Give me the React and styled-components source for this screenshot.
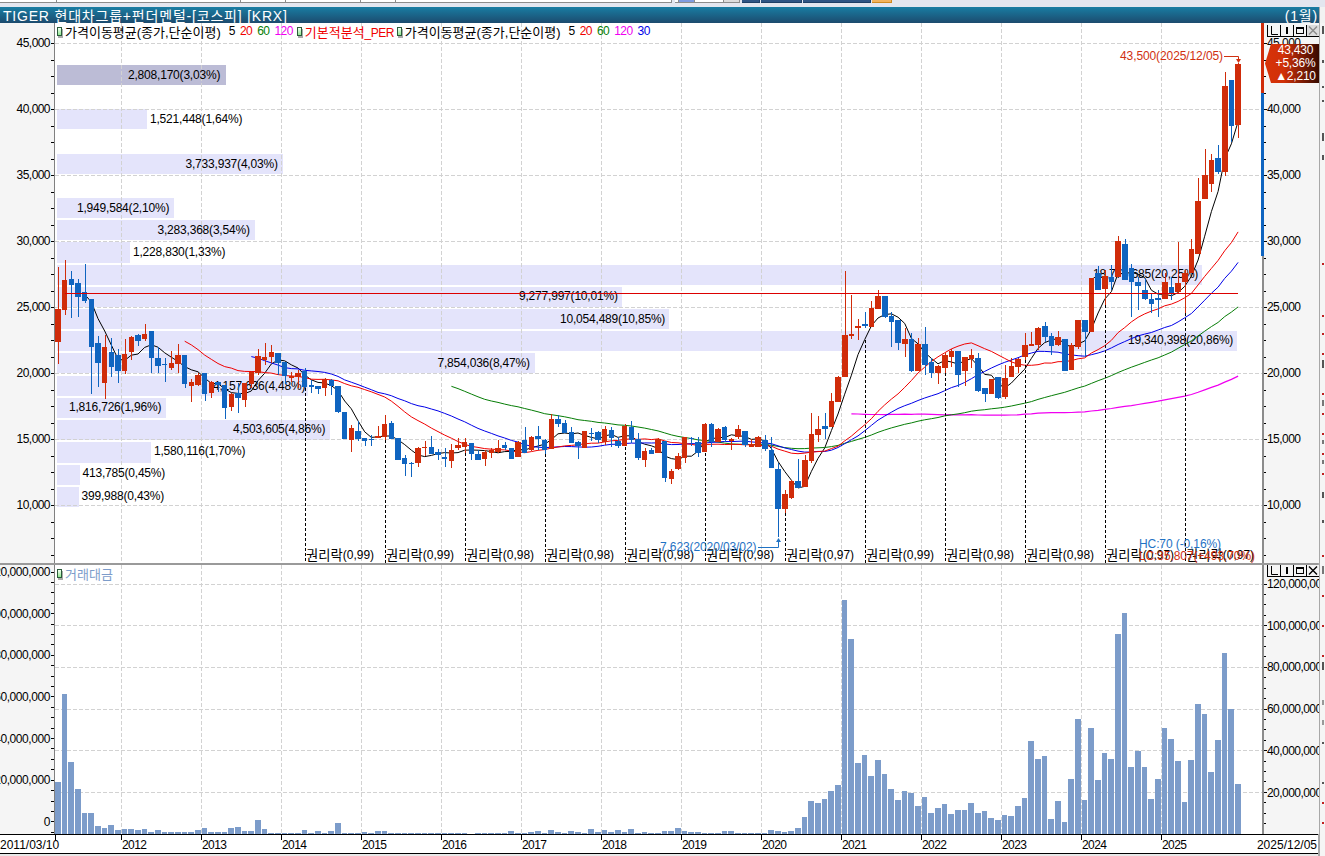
import React from 'react';
import styled, { createGlobalStyle } from 'styled-components';

const FONT = '"Liberation Sans", "Noto Sans CJK KR", sans-serif';

const GlobalStyle = createGlobalStyle`
  html, body { margin: 0; padding: 0; background: #e3e6ef; }
  body { font-family: ${FONT}; }
`;

const UP = '#d02c0a';
const DOWN = '#0f64c0';

// r/b, body top, body bottom, high, low  (in page pixels)
const candles = [
  ['r',309,342,267,364],['r',280,310,260,315],['b',279,285,271,318],['b',283,297,279,317],['b',292,301,264,303],
  ['b',299,347,299,394],['b',343,363,336,387],['r',347,383,335,399],['b',352,367,338,377],['b',355,371,349,383],
  ['r',354,371,339,374],['r',337,352,336,360],['b',335,341,334,346],['r',334,339,324,341],['b',331,358,331,373],
  ['b',358,366,347,373],['b',364,365,358,382],['r',363,368,351,370],['r',355,364,344,373],['b',355,384,355,388],
  ['r',382,386,379,402],['r',375,385,373,386],['b',373,394,373,401],['r',382,393,381,398],['b',382,385,382,392],
  ['b',385,408,385,419],['r',394,407,393,411],['b',393,398,383,413],['r',383,400,383,407],['r',372,384,371,388],
  ['r',356,373,349,375],['r',357,360,343,365],['r',352,357,345,363],['b',353,363,353,375],['b',362,376,362,384],
  ['r',376,378,372,382],['r',373,377,370,388],['b',371,387,368,388],['b',385,387,380,393],['b',386,389,386,394],
  ['r',379,388,378,396],['b',380,386,379,395],['b',386,412,386,413],['b',412,439,412,439],['r',428,440,425,452],
  ['b',431,439,421,441],['b',438,441,438,446],['b',439,440,435,446],['r',436,438,426,438],['r',424,437,415,441],
  ['b',423,439,421,439],['b',438,460,438,460],['b',458,464,455,476],['b',463,464,462,477],['r',448,463,447,467],
  ['r',447,448,441,456],['b',447,454,436,454],['b',452,455,449,460],['b',457,459,448,467],['r',450,461,444,468],
  ['r',445,448,438,450],['r',442,447,438,455],['b',443,454,443,460],['b',454,460,450,460],['r',452,459,450,466],
  ['r',450,453,448,458],['r',448,452,440,453],['b',445,448,442,450],['b',448,459,448,459],['r',442,457,441,457],
  ['b',440,453,427,453],['r',437,450,436,451],['b',436,439,426,450],['b',440,450,439,455],['r',419,449,414,449],
  ['b',419,424,415,427],['b',423,433,420,433],['b',432,443,427,443],['b',442,446,441,459],['r',431,448,431,448],
  ['b',433,434,428,441],['b',432,440,431,443],['r',429,442,426,445],['b',430,438,427,447],['b',441,446,437,448],
  ['r',426,446,424,446],['b',427,440,421,443],['b',439,458,433,460],['r',451,460,448,467],['b',450,454,448,454],
  ['r',439,453,438,453],['b',441,478,441,482],['r',471,479,469,484],['r',456,469,453,470],['r',437,458,437,463],
  ['b',438,439,437,446],['b',442,453,437,457],['r',424,452,423,452],['b',424,442,423,447],['r',429,442,428,442],
  ['b',427,440,426,442],['r',439,441,438,450],['r',429,437,425,439],['b',431,445,431,447],['r',444,447,439,447],
  ['r',437,447,436,447],['b',440,449,435,451],['b',450,468,437,468],['b',469,509,463,537],['r',494,509,490,513],
  ['r',481,498,480,499],['b',481,488,459,488],['r',460,487,455,487],['r',434,461,413,463],['r',429,435,416,442],
  ['b',426,429,413,439],['r',401,427,393,427],['r',377,402,376,402],['r',335,377,271,377],['r',334,336,295,339],
  ['r',326,328,319,340],['b',324,326,312,328],['r',308,327,301,327],['r',296,309,290,309],['b',296,317,296,318],
  ['b',316,322,312,347],['b',320,343,320,350],['r',339,344,328,357],['b',339,371,333,372],['r',344,371,338,371],
  ['b',344,365,327,375],['b',362,373,358,378],['r',366,373,365,384],['r',355,368,353,373],['r',351,357,349,367],
  ['b',351,375,351,387],['r',357,371,357,386],['r',355,359,349,368],['b',358,391,353,392],['b',388,394,388,402],
  ['r',379,394,379,394],['b',377,398,377,399],['r',378,397,365,399],['r',366,377,358,377],['r',359,367,358,373],
  ['r',345,357,333,360],['r',344,346,332,346],['r',328,345,327,350],['b',326,337,322,342],['b',336,346,333,355],
  ['r',337,345,331,346],['b',339,371,339,371],['r',345,370,343,370],['r',320,347,320,349],['b',320,332,320,357],
  ['r',278,332,278,332],['b',273,290,266,290],['r',276,289,270,305],['b',277,282,265,290],['r',241,277,236,277],
  ['b',244,280,239,280],['b',268,282,264,317],['b',282,286,277,310],['b',290,299,278,300],['b',299,304,293,313],
  ['b',298,300,290,317],['r',282,299,273,299],['b',287,294,277,300],['r',283,292,242,294],['r',273,282,270,313],
  ['r',249,273,239,273],['r',201,254,178,254],['r',175,199,149,199],['r',160,184,154,192],['b',158,172,145,174],
  ['r',86,172,72,176],['b',80,126,80,142],['r',64,125,63,138],
];

// volume bar heights in page pixels, one per candle
const volumes = [
  52,140,72,45,21,21,8,6,9,4,5,5,4,5,2,4,2,2,2,2,2,4,6,2,2,2,6,7,3,3,14,5,1,1,1,1,1,4,1,3,1,3,11,
  1,1,1,2,1,3,3,1,1,1,1,1,1,1,1,1,1,1,1,0,1,1,1,1,1,3,1,1,2,3,1,4,2,1,3,2,1,5,2,4,2,4,2,5,1,2,1,1,3,3,6,3,2,2,1,1,1,3,3,1,1,1,1,
  1,4,3,2,3,6,17,33,31,35,43,49,234,195,71,79,58,74,60,45,34,43,41,28,37,21,26,30,20,24,24,31,21,23,16,14,19,18,28,36,93,75,78,15,33,12,55,115,34,106,54,81,75,200,221,67,83,67,35,55,106,95,73,32,74,130,120,62,94,181,125,50,
];

const profileBars = [
  { top: 65, bottom: 85, right: 226, dark: true, text: '2,808,170(3,03%)', x: 128, y: 74.5 },
  { top: 109, bottom: 129, right: 147, text: '1,521,448(1,64%)', x: 150, y: 118.5 },
  { top: 154, bottom: 174, right: 283, text: '3,733,937(4,03%)', x: 185.5, y: 163.5 },
  { top: 198, bottom: 218, right: 174, text: '1,949,584(2,10%)', x: 77, y: 207.5 },
  { top: 220, bottom: 240, right: 255, text: '3,283,368(3,54%)', x: 157.5, y: 229.5 },
  { top: 242, bottom: 263, right: 130, text: '1,228,830(1,33%)', x: 133, y: 251.5 },
  { top: 265, bottom: 285, right: 1202, text: '18,775,685(20,25%)', x: 1093, y: 274 },
  { top: 287, bottom: 307, right: 622, text: '9,277,997(10,01%)', x: 519, y: 296 },
  { top: 309, bottom: 329, right: 669, text: '10,054,489(10,85%)', x: 560, y: 318.5 },
  { top: 331, bottom: 351, right: 1237, text: '19,340,398(20,86%)', x: 1128, y: 340 },
  { top: 353, bottom: 373, right: 535, text: '7,854,036(8,47%)', x: 437.5, y: 362.5 },
  { top: 376, bottom: 396, right: 308, text: '4,157,636(4,48%)', x: 213, y: 385.5 },
  { top: 398, bottom: 418, right: 166, text: '1,816,726(1,96%)', x: 69, y: 407 },
  { top: 420, bottom: 440, right: 330, text: '4,503,605(4,86%)', x: 233, y: 429 },
  { top: 442, bottom: 463, right: 151, text: '1,580,116(1,70%)', x: 154, y: 451 },
  { top: 465, bottom: 485, right: 80, text: '413,785(0,45%)', x: 82.5, y: 473 },
  { top: 487, bottom: 507, right: 79, text: '399,988(0,43%)', x: 81.5, y: 496 },
];

const exRights = [
  { x: 305.5, from: 388, ratio: '0,99' }, { x: 385.5, from: 440, ratio: '0,99' },
  { x: 465.5, from: 453, ratio: '0,98' }, { x: 545.5, from: 454, ratio: '0,98' },
  { x: 625.5, from: 447, ratio: '0,98' }, { x: 705.5, from: 453, ratio: '0,98' },
  { x: 785.5, from: 513, ratio: '0,97' }, { x: 865.5, from: 340, ratio: '0,99' },
  { x: 945.5, from: 373, ratio: '0,98' }, { x: 1025.5, from: 360, ratio: '0,98' },
  { x: 1105.5, from: 305, ratio: '0,97' }, { x: 1185.5, from: 313, ratio: '0,97' },
];

const priceLabels = ['45,000', '40,000', '35,000', '30,000', '25,000', '20,000', '15,000', '10,000'];
const volumeLabels = ['120,000,000', '100,000,000', '80,000,000', '60,000,000', '40,000,000', '20,000,000'];
const years = [2012, 2013, 2014, 2015, 2016, 2017, 2018, 2019, 2020, 2021, 2022, 2023, 2024, 2025];
const yearX = years.map((_, i) => 121.5 + i * 80);

const candleX = (i) => 58 + i * 6.667;
const priceY = (i) => 43 + i * 66;
const volY = (i) => 584 + i * 41.7;
const leftVolY = (i) => 572 + i * 41.65;

const closes = candles.map((c) => (c[0] === 'r' ? c[1] : c[2]));
const movingAverage = (n) => {
  const pts = [];
  for (let i = n - 1; i < closes.length; i++) {
    let sum = 0;
    for (let j = i - n + 1; j <= i; j++) sum += closes[j];
    pts.push(`${candleX(i).toFixed(1)},${(sum / n).toFixed(1)}`);
  }
  return pts.join(' ');
};

const Page = styled.div`
  width: 1325px;
  height: 856px;
  overflow: hidden;
  display: flex;
  flex-direction: column;
  background: #e3e6ef;
`;

const TopStrip = styled.div`
  height: 7px;
  display: flex;
  align-items: flex-start;
`;

const TopCell = styled.div`
  width: ${(p) => p.$w}px;
  height: 3px;
  box-sizing: border-box;
  flex: none;
  background: ${(p) => p.$bg || '#fff'};
  border-bottom: 1px solid ${(p) => p.$line || '#8c8c8c'};
  border-right: 1px solid ${(p) => p.$line || '#8c8c8c'};
  margin-right: ${(p) => p.$gap || 0}px;
`;

const TitleRow = styled.div`
  height: 16px;
  display: flex;
`;

const TitleBar = styled.div`
  width: 1319px;
  box-sizing: border-box;
  padding: 0 1px 0 3px;
  display: flex;
  align-items: center;
  justify-content: space-between;
  background: linear-gradient(#197da3, #1c4b6e);
  color: #fff;
  font-size: 14px;
  letter-spacing: 0.8px;
  white-space: nowrap;
`;

const TitleEdge = styled.div`
  flex: 1;
  background: #f2f2f2;
  border-left: 1px solid #a8a8a8;
`;

const Workspace = styled.div`
  flex: 1;
  display: flex;
  min-height: 0;
`;

const ChartColumn = styled.div`
  width: 1320px;
  box-sizing: border-box;
  flex: none;
  border-right: 2px solid #a8a8a8;
  display: flex;
  flex-direction: column;
`;

const SideStrip = styled.svg`
  flex: 1;
  height: 833px;
  background: #f5f5f5;
`;

const Pane = styled.div`
  height: ${(p) => p.$h}px;
  display: grid;
  grid-template-columns: 55px 1207px 1fr;
  box-sizing: border-box;
  border-top: ${(p) => (p.$divider ? '2px solid #9a9a9a' : 'none')};
`;

const LeftAxis = styled.div`
  background: #f5f5f5;
  border-right: 1px solid #808080;
  overflow: hidden;

  svg { display: block; }
`;

const Plot = styled.div`
  position: relative;
  background: #fff;

  svg { display: block; }
`;

const RightAxis = styled.div`
  position: relative;
  background: #f5f5f5;
  border-left: 2px solid #8c8c8c;

  svg { display: block; }
`;

const AxisText = styled.text`
  font-family: ${FONT};
  font-size: 12px;
  letter-spacing: -0.55px;
  fill: #000;
  dominant-baseline: central;
`;

const WideAxisText = styled(AxisText)`
  letter-spacing: -0.42px;
`;

const DateText = styled.text`
  font-family: ${FONT};
  font-size: 12px;
  fill: #000;
  dominant-baseline: central;
`;

const BarText = styled.text`
  font-family: ${FONT};
  font-size: 12px;
  letter-spacing: -0.2px;
  fill: #000;
  dominant-baseline: central;
`;

const ExRightText = styled.text`
  font-family: ${FONT};
  font-size: 13.3px;
  fill: #000;
  dominant-baseline: central;
`;

const ExRightRatio = styled.tspan`
  font-size: 12px;
`;

const MarkText = styled.text`
  font-family: ${FONT};
  font-size: 12px;
  letter-spacing: -0.1px;
  fill: ${(p) => p.$color};
  dominant-baseline: central;
`;

const Legend = styled.div`
  position: absolute;
  left: 2px;
  top: 1px;
  display: flex;
  align-items: center;
  height: 14px;
  font-size: 13px;
  color: ${(p) => p.$color || '#000'};
  white-space: nowrap;
`;

const LegendIcon = styled.span`
  width: 3px;
  height: 7px;
  margin-left: ${(p) => p.$ml || 0}px;
  margin-right: 3px;
  flex: none;
  border: 1px solid #2a5a3a;
  background: linear-gradient(#f4fff4, #8fe88f);
  box-shadow: 1px 2px 0 #ababab;
`;

const LegendRed = styled.span`
  color: #f00000;
`;

const LegendNum = styled.span`
  margin-left: ${(p) => p.$ml}px;
  color: ${(p) => p.$color};
  font-size: 12px;
  letter-spacing: -0.55px;
`;

const AxisBand = styled.div`
  position: absolute;
  left: -3px;
  top: ${(p) => p.$top}px;
  width: 3px;
  height: ${(p) => p.$h}px;
  background: ${(p) => p.$color};
`;

const PriceTag = styled.div`
  position: absolute;
  left: 1px;
  top: 21px;
  width: 54px;
  height: 39px;
  box-sizing: border-box;
  padding-left: 7px;
  clip-path: polygon(6px 0, 100% 0, 100% 100%, 6px 100%, 0 50%);
  background: linear-gradient(90deg, #d83208, #d03008 35%, #360a00);
  color: #fff;
  font-size: 12px;
  letter-spacing: -0.2px;
  line-height: 13px;
  text-align: center;
`;

const Controls = styled.div`
  position: absolute;
  right: 0;
  top: ${(p) => p.$top}px;
  display: flex;
  height: 11px;
  border-bottom: 1px solid #000;
`;

const ControlBtn = styled.div`
  width: 12px;
  height: 11px;
  border-left: 1px solid #000;
  background: ${(p) => (p.$muted ? '#dcdcdc' : 'transparent')};

  svg { display: block; }
`;

const XAxisRow = styled.div`
  height: 20px;
  box-sizing: border-box;
  background: #fff;
  border-top: 1px solid #000;
  border-bottom: 1px solid #000;

  svg { display: block; }
`;

const BottomStrip = styled.div`
  height: 2px;
  background: #e8e8e8;
`;

function ControlButtons({ top, muted }) {
  return (
    <Controls $top={top}>
      <ControlBtn>
        <svg width="12" height="11"><path d="M3.5 1V9.5H10" fill="none" stroke="#000" /></svg>
      </ControlBtn>
      <ControlBtn>
        <svg width="12" height="11"><rect x="5" y="2" width="2" height="7" fill="#000" /></svg>
      </ControlBtn>
      <ControlBtn>
        <svg width="12" height="11"><rect x="2.5" y="2.5" width="7" height="6" fill="none" stroke="#000" /><rect x="2" y="2" width="8" height="2" /></svg>
      </ControlBtn>
      <ControlBtn $muted={muted}>
        <svg width="12" height="11"><path d="M2 1.5L10 9.5M10 1.5L2 9.5" fill="none" stroke={muted ? '#8a8a8a' : '#000'} strokeWidth="1.4" /></svg>
      </ControlBtn>
    </Controls>
  );
}

function minorTicks(start, step, count) {
  const out = [];
  for (let i = 0; i < count; i++) out.push(start + i * step);
  return out;
}

function PriceChart() {
  return (
    <svg width="1207" height="540" viewBox="55 23 1207 540">
      <g shapeRendering="crispEdges">
        {profileBars.map((b) => (
          <rect key={b.top} x="57" y={b.top} width={b.right - 57} height={b.bottom - b.top} fill={b.dark ? '#bcbcd6' : '#e4e4fb'} />
        ))}
        {yearX.map((x) => (
          <line key={x} x1={x} x2={x} y1="23" y2="563" stroke="#d2d2d2" strokeDasharray="4 2" />
        ))}
        {priceLabels.map((_, i) => (
          <line key={i} x1="55" x2="1262" y1={priceY(i) + 0.5} y2={priceY(i) + 0.5} stroke="#d2d2d2" strokeDasharray="4 2" />
        ))}
      </g>
      {profileBars.map((b) => (
        <BarText key={b.text} x={b.x} y={b.y}>{b.text}</BarText>
      ))}
      <polyline points={movingAverage(5)} fill="none" stroke="#000" strokeWidth="1" />
      <polyline points={movingAverage(120)} fill="none" stroke="#f000f0" strokeWidth="1.2" />
      <polyline points={movingAverage(60)} fill="none" stroke="#067d06" strokeWidth="1" />
      <polyline points={movingAverage(30)} fill="none" stroke="#0000e8" strokeWidth="1" />
      <polyline points={movingAverage(20)} fill="none" stroke="#f00000" strokeWidth="1" />
      <g shapeRendering="crispEdges">
        {candles.map((c, i) => {
          const px = candleX(i);
          const left = Math.round(px - 2.8);
          const right = Math.round(px + 2.8);
          const color = c[0] === 'r' ? UP : DOWN;
          return (
            <g key={i} fill={color}>
              <rect x={Math.round(px)} y={c[3]} width="1" height={c[4] - c[3]} />
              <rect x={left} y={c[1]} width={right - left} height={Math.max(c[2] - c[1], 1)} />
            </g>
          );
        })}
        <line x1="65" x2="1238" y1="293.5" y2="293.5" stroke="#dc0000" />
        {exRights.map((e) => (
          <line key={e.x} x1={e.x} x2={e.x} y1={e.from} y2="563" stroke="#000" strokeDasharray="3 2" />
        ))}
      </g>
      {exRights.map((e) => (
        <ExRightText key={e.x} x={e.x + 0.5} y="555">권리락<ExRightRatio>({e.ratio})</ExRightRatio></ExRightText>
      ))}
      <MarkText $color="#1f72c4" x="660" y="547">7,623(2020/03/02)</MarkText>
      <path d="M758 547.5H778.5V541" fill="none" stroke="#1f72c4" />
      <path d="M778.5 538L776 542H781Z" fill="#1f72c4" />
      <MarkText $color="#d03010" x="1120" y="56">43,500(2025/12/05)</MarkText>
      <path d="M1224 56.5H1238.5V60" fill="none" stroke="#d03010" />
      <path d="M1238.5 63L1236 59H1241Z" fill="#d03010" />
      <MarkText $color="#1f72c4" x="1139" y="544">HC:70 (-0,16%)</MarkText>
      <MarkText $color="#d03010" x="1139" y="556">LC:35,807(+493,70%)</MarkText>
    </svg>
  );
}

function VolumeChart() {
  return (
    <svg width="1207" height="269" viewBox="55 565 1207 269">
      <g shapeRendering="crispEdges">
        {yearX.map((x) => (
          <line key={x} x1={x} x2={x} y1="565" y2="834" stroke="#d2d2d2" strokeDasharray="4 2" />
        ))}
        {volumeLabels.map((_, i) => (
          <line key={i} x1="55" x2="1262" y1={volY(i)} y2={volY(i)} stroke="#d2d2d2" strokeDasharray="4 2" />
        ))}
        {volumes.map((h, i) => (
          <rect key={i} x={candleX(i) - 3} y={834 - h} width="5.6" height={h} fill="#7c9cca" />
        ))}
      </g>
    </svg>
  );
}

export default function App() {
  const sideMarks = [
    [26, 8, '#555'], [60, 3, '#555'], [86, 2, '#555'], [100, 2, '#555'], [133, 8, '#555'], [155, 5, '#555'],
    [263, 2, '#c02020'], [315, 2, '#c02020'], [333, 2, '#c02020'], [353, 2, '#c02020'], [360, 8, '#555'],
    [393, 2, '#c02020'], [400, 6, '#777'], [413, 2, '#c02020'], [433, 2, '#c02020'], [440, 4, '#777'], [453, 2, '#c02020'],
    [460, 4, '#777'], [473, 2, '#c02020'], [492, 6, '#555'], [520, 3, '#555'], [555, 2, '#c02020'], [566, 8, '#777'],
    [595, 2, '#c02020'], [625, 2, '#c02020'], [655, 2, '#c02020'], [662, 8, '#555'], [700, 5, '#999'], [720, 5, '#999'],
    [742, 2, '#555'], [782, 2, '#555'], [802, 2, '#c02020'], [822, 2, '#c02020'],
  ];
  return (
    <Page>
      <GlobalStyle />
      <TopStrip>
        <TopCell $w={57} />
        <TopCell $w={184} />
        <TopCell $w={45} />
        <TopCell $w={75} />
        <TopCell $w={35} />
        <TopCell $w={276} $gap={3} />
        <TopCell $w={4} />
        <TopCell $w={16} $bg="#7f9be0" />
        <TopCell $w={29} />
        <TopCell $w={16} $bg="#dcdcdc" $gap={2} />
        <TopCell $w={18} $bg="#2f5584" $line="#1f3f66" $gap={1} />
        <TopCell $w={41} $bg="#2f5584" $line="#1f3f66" $gap={1} />
        <TopCell $w={68} $bg="#2f5584" $line="#1f3f66" $gap={1} />
        <TopCell $w={20} $bg="#f2b35c" $line="#d08a20" />
      </TopStrip>
      <TitleRow>
        <TitleBar>
          <span>TIGER 현대차그룹+펀더멘털-[코스피] [KRX]</span>
          <span>(1월)</span>
        </TitleBar>
        <TitleEdge />
      </TitleRow>
      <Workspace>
        <ChartColumn>
          <Pane $h={540}>
            <LeftAxis>
              <svg width="54" height="540" viewBox="0 23 54 540">
                <g shapeRendering="crispEdges" stroke="#000">
                  {minorTicks(43, 16.5, 33).map((y) => (
                    <line key={y} x1="51" x2="54" y1={y + 0.5} y2={y + 0.5} />
                  ))}
                </g>
                {priceLabels.map((t, i) => (
                  <AxisText key={t} x="50" y={priceY(i)} textAnchor="end">{t}</AxisText>
                ))}
              </svg>
            </LeftAxis>
            <Plot>
              <PriceChart />
              <Legend>
                <LegendIcon />
                <span>가격이동평균(종가,단순이평)</span>
                <LegendNum $ml={8} $color="#000">5</LegendNum>
                <LegendNum $ml={5} $color="#f00000">20</LegendNum>
                <LegendNum $ml={5} $color="#067d06">60</LegendNum>
                <LegendNum $ml={5} $color="#f000f0">120</LegendNum>
                <LegendIcon $ml={4} />
                <LegendRed>기본적분석<LegendNum $ml={0}>_PER</LegendNum></LegendRed>
                <LegendIcon $ml={3} />
                <span>가격이동평균(종가,단순이평)</span>
                <LegendNum $ml={8} $color="#000">5</LegendNum>
                <LegendNum $ml={5} $color="#f00000">20</LegendNum>
                <LegendNum $ml={5} $color="#067d06">60</LegendNum>
                <LegendNum $ml={5} $color="#f000f0">120</LegendNum>
                <LegendNum $ml={5} $color="#0000e8">30</LegendNum>
              </Legend>
            </Plot>
            <RightAxis>
              <svg width="55" height="540" viewBox="1264 23 55 540">
                <g shapeRendering="crispEdges" stroke="#000">
                  {minorTicks(43, 16.5, 33).map((y, i) => (
                    <line key={y} x1="1264" x2={i % 4 === 0 ? 1267 : 1266} y1={y + 0.5} y2={y + 0.5} />
                  ))}
                </g>
                {priceLabels.map((t, i) => (
                  <AxisText key={t} x="1267" y={priceY(i)}>{t}</AxisText>
                ))}
              </svg>
              <AxisBand $top={0} $h={70} $color={UP} />
              <AxisBand $top={70} $h={163} $color={DOWN} />
              <PriceTag>
                <div>43,430</div>
                <div>+5,36%</div>
                <div>▲2,210</div>
              </PriceTag>
              <ControlButtons top={2} muted />
            </RightAxis>
          </Pane>
          <Pane $h={271} $divider>
            <LeftAxis>
              <svg width="54" height="269" viewBox="0 565 54 269">
                <g shapeRendering="crispEdges" stroke="#000">
                  {minorTicks(572, 10.41, 26).map((y) => (
                    <line key={y} x1="51" x2="54" y1={y} y2={y} />
                  ))}
                </g>
                {[...volumeLabels, '0'].map((t, i) => (
                  <WideAxisText key={t} x="50" y={leftVolY(i)} textAnchor="end">{t}</WideAxisText>
                ))}
              </svg>
            </LeftAxis>
            <Plot>
              <VolumeChart />
              <Legend $color="#7c9cca">
                <LegendIcon />
                <span>거래대금</span>
              </Legend>
            </Plot>
            <RightAxis>
              <svg width="55" height="269" viewBox="1264 565 55 269">
                <g shapeRendering="crispEdges" stroke="#000">
                  {minorTicks(584, 10.42, 25).map((y, i) => (
                    <line key={y} x1="1264" x2={i % 4 === 0 ? 1267 : 1266} y1={y} y2={y} />
                  ))}
                </g>
                {volumeLabels.map((t, i) => (
                  <AxisText key={t} x="1267" y={volY(i)}>{t}</AxisText>
                ))}
              </svg>
              <ControlButtons top={0} />
            </RightAxis>
          </Pane>
          <XAxisRow>
            <svg width="1318" height="18" viewBox="0 835 1318 18">
              <g shapeRendering="crispEdges" stroke="#000">
                <line x1="55.5" x2="55.5" y1="835" y2="840" />
                {yearX.map((x) => (
                  <line key={x} x1={x} x2={x} y1="835" y2="840" />
                ))}
              </g>
              <DateText x="0" y="844.5">2011/03/10</DateText>
              {years.map((y, i) => (
                <AxisText key={y} x={yearX[i] + 0.5} y="844.5">{y}</AxisText>
              ))}
              <DateText x="1317" y="844.5" textAnchor="end">2025/12/05</DateText>
            </svg>
          </XAxisRow>
          <BottomStrip />
        </ChartColumn>
        <SideStrip viewBox="0 23 5 833" preserveAspectRatio="none">
          {sideMarks.map(([y, h, color]) => (
            <rect key={y} x="2" y={y} width="2" height={h} fill={color} />
          ))}
        </SideStrip>
      </Workspace>
    </Page>
  );
}
